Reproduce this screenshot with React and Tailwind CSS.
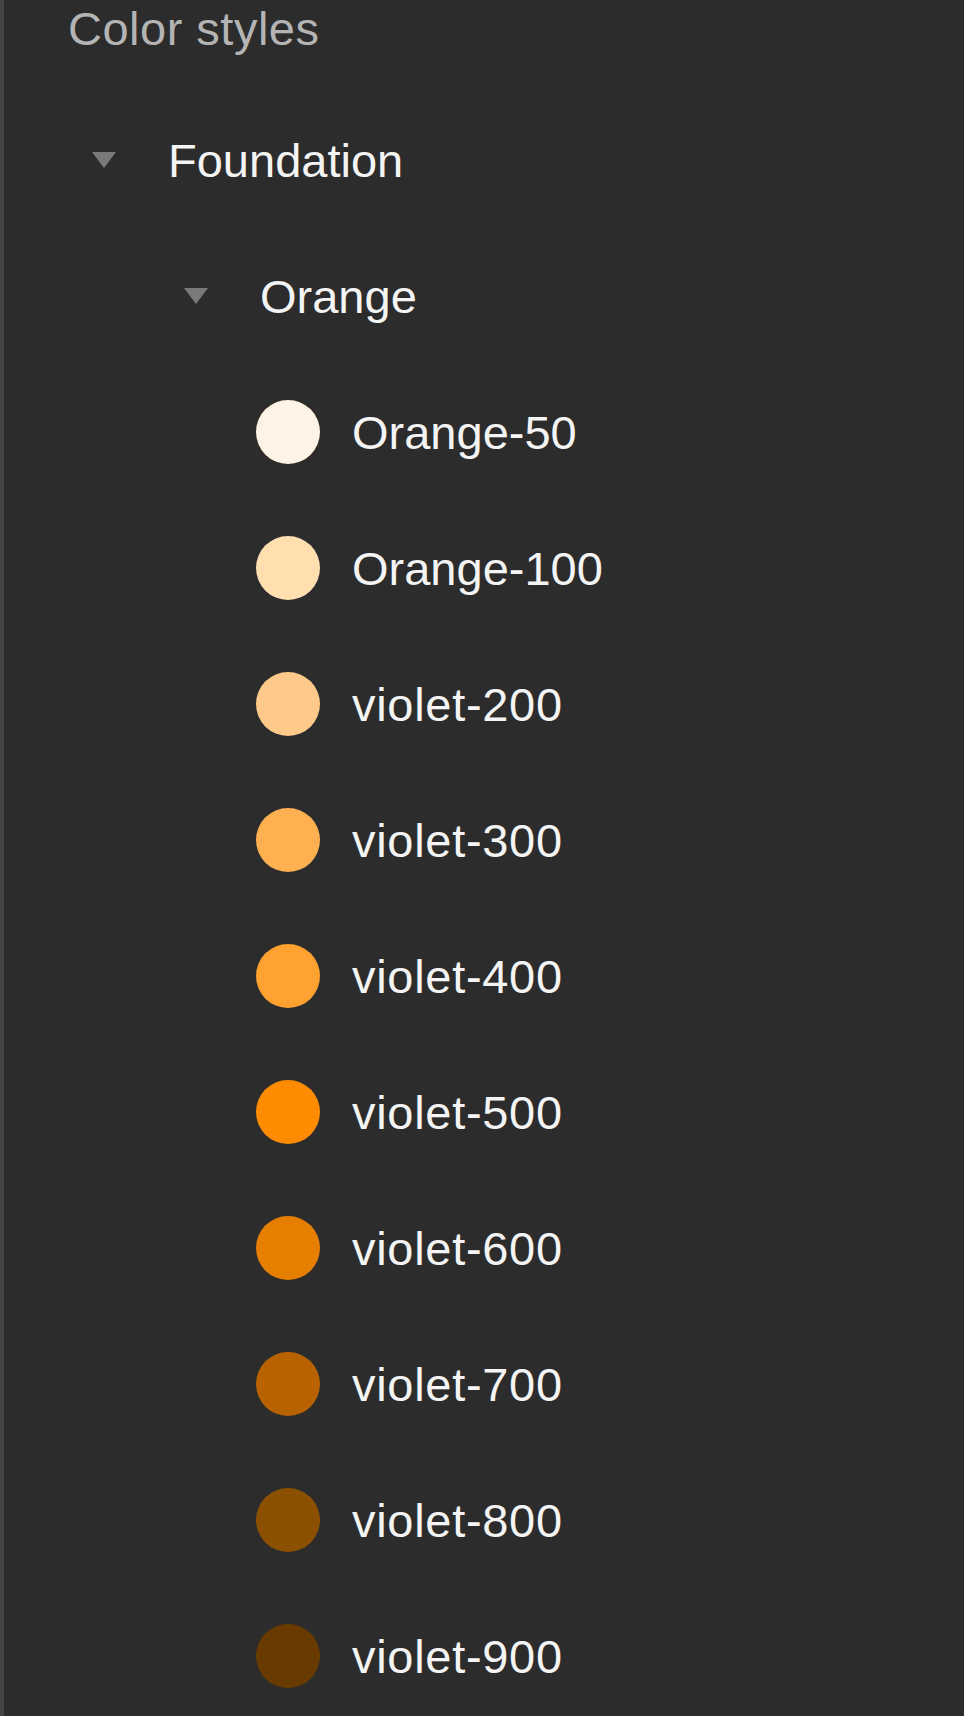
import React from "react";

const swatches = [
  { name: "Orange-50", color: "#fff3e7", wide: false },
  { name: "Orange-100", color: "#ffdeb0", wide: false },
  { name: "violet-200", color: "#ffc989", wide: true },
  { name: "violet-300", color: "#ffb152", wide: true },
  { name: "violet-400", color: "#ffa22f", wide: true },
  { name: "violet-500", color: "#ff8c00", wide: true },
  { name: "violet-600", color: "#e67e00", wide: true },
  { name: "violet-700", color: "#b86300", wide: true },
  { name: "violet-800", color: "#8b5000", wide: true },
  { name: "violet-900", color: "#6a3b00", wide: true },
];

function Caret() {
  return (
    <svg width="24" height="16" viewBox="0 0 24 16" className="shrink-0">
      <polygon points="0,0 24,0 12,16" fill="#7a7a7a" />
    </svg>
  );
}

export default function App() {
  return (
    <div
      className="h-[1716px] w-full overflow-hidden bg-[#2c2c2c] border-l-4 border-[#434343] text-[47px] leading-none"
      style={{ fontFamily: '"Liberation Sans", Arial, sans-serif' }}
    >
      <div className="flex h-[56px] items-center pl-[64px] text-[#b4b4b4] tracking-[0.5px]">
        Color styles
      </div>
      <div className="mt-[36px] flex h-[136px] items-center pl-[88px] text-[#f4f4f4]">
        <Caret />
        <span className="ml-[52px]">Foundation</span>
      </div>
      <div className="flex h-[136px] items-center pl-[180px] text-[#f4f4f4]">
        <Caret />
        <span className="ml-[52px]">Orange</span>
      </div>
      {swatches.map((s) => (
        <div
          key={s.name}
          className="flex h-[136px] items-center pl-[252px] text-[#f4f4f4]"
        >
          <div
            className="h-[64px] w-[64px] shrink-0 rounded-full"
            style={{ backgroundColor: s.color }}
          />
          <span className={s.wide ? "ml-[32px] tracking-[0.7px]" : "ml-[32px]"}>
            {s.name}
          </span>
        </div>
      ))}
    </div>
  );
}
